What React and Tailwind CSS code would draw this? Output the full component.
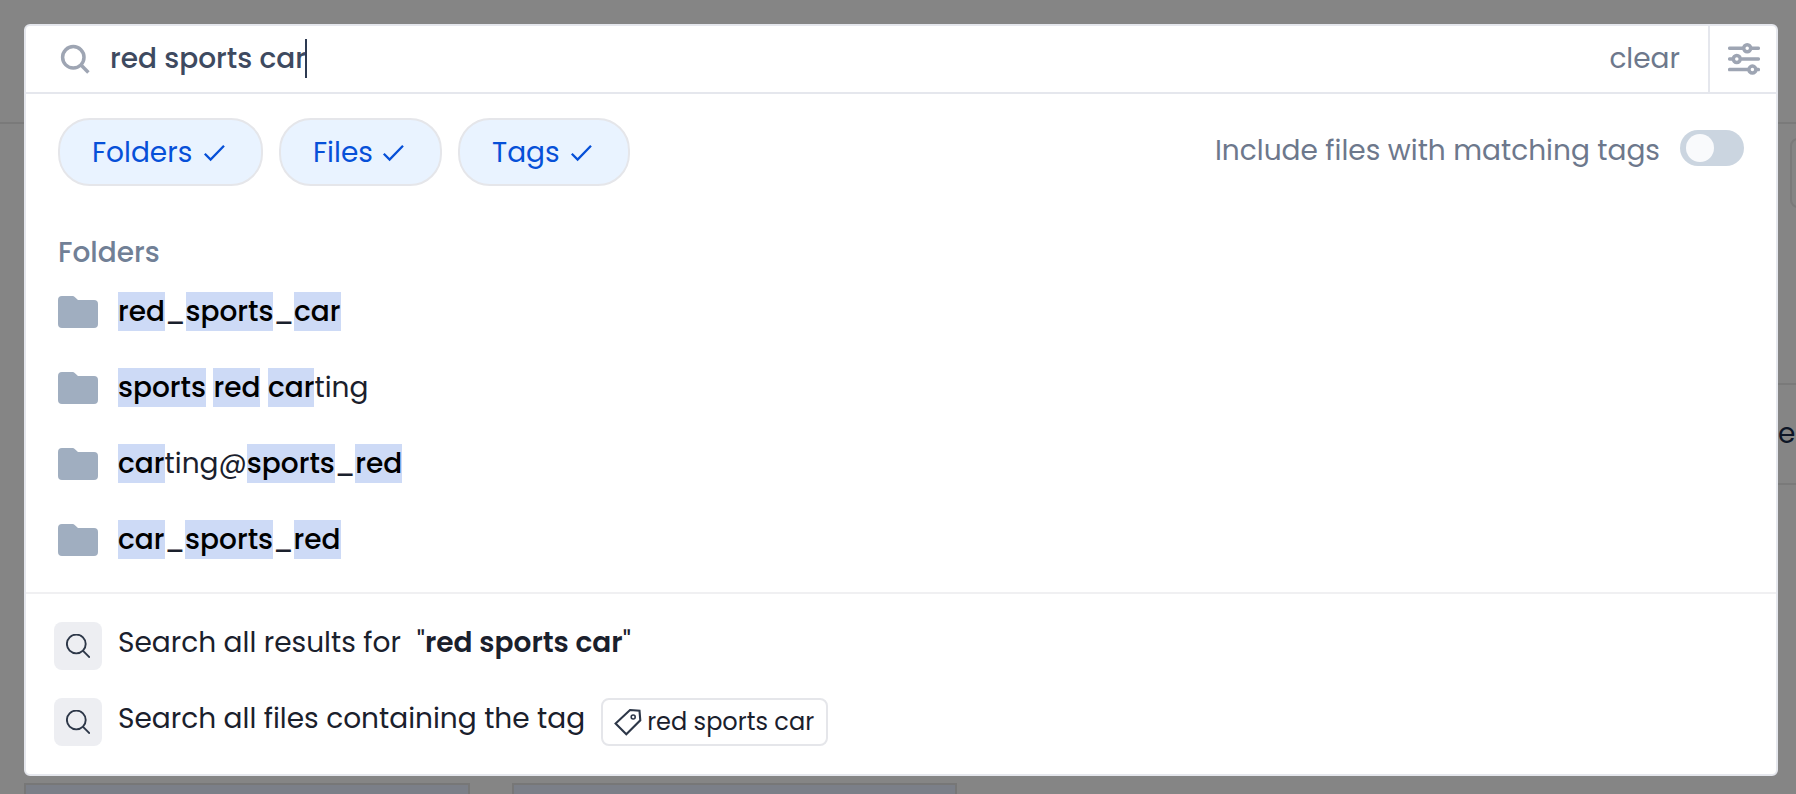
const folders = [
  [["red", 1], ["_", 0], ["sports", 1], ["_", 0], ["car", 1]],
  [["sports", 1], [" ", 0], ["red", 1], [" ", 0], ["car", 1], ["ting", 0]],
  [["car", 1], ["ting@", 0], ["sports", 1], ["_", 0], ["red", 1]],
  [["car", 1], ["_", 0], ["sports", 1], ["_", 0], ["red", 1]],
];

function Chip({ label, className }) {
  return (
    <button className={`flex h-[68px] items-center justify-between rounded-[32px] border-2 border-[#e5e6ea] bg-[#e9f3ff] pl-8 pr-[35px] text-[#0650d8] ${className}`}>
      <span className="pt-0.5">{label}</span>
      <svg className="h-6 w-6 shrink-0" viewBox="0 0 24 24" fill="none" stroke="currentColor" strokeWidth="2.3">
        <path d="M2.8 13.8 L8.6 19.6 L22 5.8" />
      </svg>
    </button>
  );
}

function FolderIcon() {
  return (
    <svg className="h-8 w-10 shrink-0" viewBox="0 0 40 32" fill="#a0aec0">
      <path d="M4 0H14.6a3 3 0 0 1 2.1.9L20 4H36a4 4 0 0 1 4 4V28a4 4 0 0 1-4 4H4a4 4 0 0 1-4-4V4a4 4 0 0 1 4-4z" />
    </svg>
  );
}

function SearchBox() {
  return (
    <div className="flex size-12 shrink-0 items-center justify-center rounded-lg bg-[#edeef2]">
      <svg className="size-6" viewBox="0 0 24 24" fill="none" stroke="#2d3748" strokeWidth="1.9">
        <circle cx="10.3" cy="10" r="9.4" />
        <path d="M16.8 16.6 L23.8 23.6" />
      </svg>
    </div>
  );
}

function Backdrop() {
  return (
    <div className="absolute inset-0 overflow-hidden">
      <div className="absolute top-[122px] h-0.5 w-full bg-[#7a7a7a]" />
      <div className="absolute left-[1790px] top-[138px] h-[70px] w-20 rounded-lg border-2 border-[#7a7a7a]" />
      <div className="absolute right-0 top-[383px] h-[102px] w-20 border-y-2 border-[#7a7a7a]" />
      <span className="absolute left-[1778px] top-[413px] text-[#0d1526]">e</span>
      <div className="absolute left-6 top-[783px] h-20 w-[446px] border-2 border-[#777777] bg-[#7b7f88]" />
      <div className="absolute left-[512px] top-[783px] h-20 w-[445px] border-2 border-[#777777] bg-[#7b7f88]" />
    </div>
  );
}

export default function App() {
  return (
    <div className="relative h-[794px] w-[1796px] overflow-hidden bg-[#858585] px-6 pt-6 font-['Poppins','Inter',sans-serif] text-[28px] leading-[42px]">
      <Backdrop />
      <div className="relative flex h-[752px] w-[1754px] flex-col rounded-md border-2 border-[#e5e7ed] bg-white">
        <header className="flex h-[68px] shrink-0 items-stretch border-b-2 border-[#e5e7ed]">
          <div className="flex flex-1 items-center pl-[34px]">
            <svg className="size-8" viewBox="0 0 32 32" fill="none" stroke="#9ea5b3" strokeWidth="3.5">
              <circle cx="13.3" cy="14.3" r="10.7" />
              <path d="M20.8 21.8 L28.4 29.4" />
            </svg>
            <span className="ml-[18px] font-medium text-[#3e4a60]">red sports car</span>
            <span className="-ml-px mb-0.5 h-[39px] w-0.5 bg-[#2d3a52]" />
          </div>
          <button className="pr-7 text-[#6d788c]">clear</button>
          <button className="flex w-[68px] items-center justify-center border-l-2 border-[#e5e7ed] pl-0.5">
            <svg className="size-8 shrink-0" viewBox="0 0 32 32" fill="none" stroke="#9ea5b3" strokeWidth="3.5">
              <path strokeLinecap="round" d="M1.7 5.3H14.5M24 5.3H30.3M1.7 16H4.5M14 16H30.3M1.7 26.6H19.5M29 26.6H30.3" />
              <circle cx="19.2" cy="5.3" r="3.5" />
              <circle cx="8.8" cy="16" r="3.5" />
              <circle cx="24.4" cy="26.6" r="3.5" />
            </svg>
          </button>
        </header>

        <div className="mt-6 flex h-[68px] shrink-0 items-center gap-4 px-8">
          <Chip label="Folders" className="w-[205px]" />
          <Chip label="Files" className="w-[163px]" />
          <Chip label="Tags" className="w-[172px]" />
          <div className="ml-auto flex items-center">
            <span className="pb-0.5 text-[#6d788c]">Include files with matching tags</span>
            <div className="mb-2 ml-5 flex h-9 w-16 items-center rounded-full bg-[#cbd5e0] px-1.5">
              <div className="size-7 rounded-full bg-[#f9fafc]" />
            </div>
          </div>
        </div>

        <h2 className="mt-[46px] pl-8 font-medium text-[#718096]">Folders</h2>
        <ul className="flex flex-col pb-[14px]">
          {folders.map((parts, i) => (
            <li key={i} className="flex h-[76px] items-center gap-5 pl-8">
              <FolderIcon />
              <span className="whitespace-pre text-[#1a202c]">
                {parts.map(([text, hit], j) =>
                  hit ? (
                    <mark key={j} className="bg-[#cddaf6] font-medium text-black">{text}</mark>
                  ) : (
                    <span key={j}>{text}</span>
                  )
                )}
              </span>
            </li>
          ))}
        </ul>

        <footer className="flex flex-col border-t-2 border-[#f0f0f2] pt-[14px] text-[#1a202c]">
          <div className="flex h-[76px] items-center pl-7">
            <SearchBox />
            <span className="ml-4 pb-1.5">Search all results for</span>
            <span className="ml-4 pb-1.5">"<b className="font-semibold">red sports car</b>"</span>
          </div>
          <div className="flex h-[76px] items-center pl-7">
            <SearchBox />
            <span className="ml-4 pb-1.5">Search all files containing the tag</span>
            <span className="ml-4 flex h-12 items-center rounded-lg border-2 border-[#e5e6ea] pl-[11px] pr-3 text-2xl">
              <svg className="mr-[5px] size-7" viewBox="0 0 28 28" fill="none" stroke="#2d3748" strokeWidth="2.1">
                <path d="M16 2 L25.5 2.8 L26.3 12.3 L12.3 26.2 L1.6 15.6 Z" />
                <circle cx="19.2" cy="9" r="2" strokeWidth="1.6" />
              </svg>
              red sports car
            </span>
          </div>
        </footer>
      </div>
    </div>
  );
}
